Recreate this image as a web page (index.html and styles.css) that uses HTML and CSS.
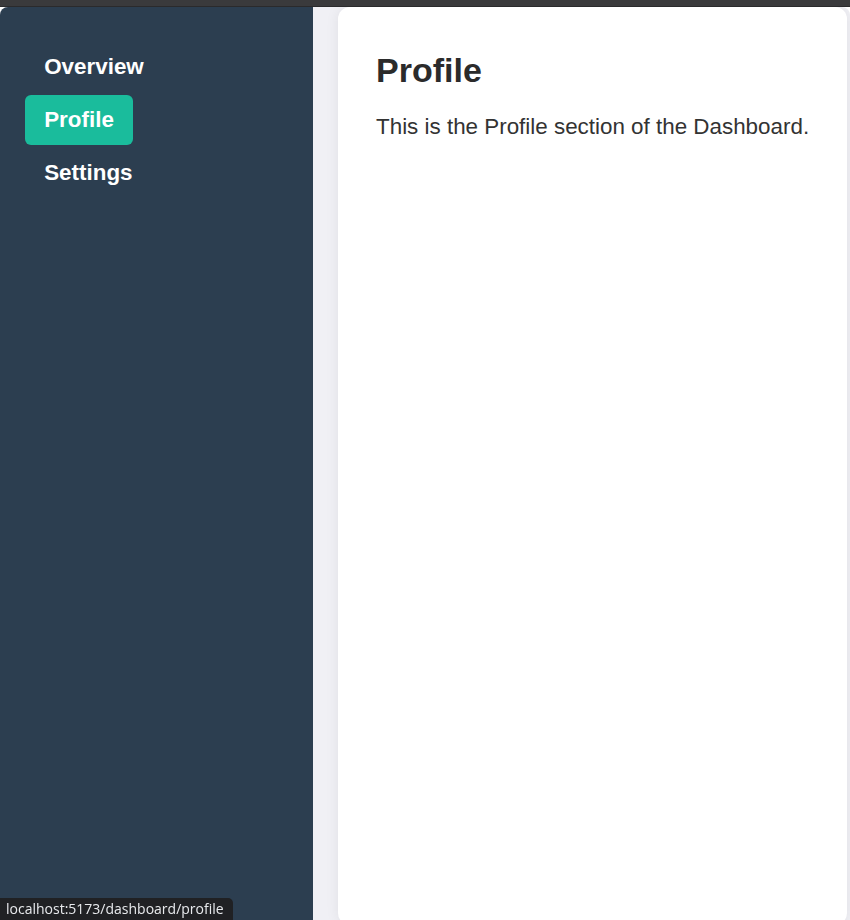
FILE: index.html
```html
<!DOCTYPE html>
<html lang="en">
<head>
<meta charset="utf-8">
<title>Dashboard</title>
<link rel="stylesheet" href="styles.css">
</head>
<body>
<div class="chrome"></div>
<div class="app">
  <aside class="sidebar">
    <nav class="nav">
      <a class="nav-item" href="#">Overview</a>
      <a class="nav-item active" href="#">Profile</a>
      <a class="nav-item" href="#">Settings</a>
    </nav>
  </aside>
  <main class="main">
    <section class="card">
      <h1 class="title">Profile</h1>
      <p class="text">This is the Profile section of the Dashboard.</p>
    </section>
  </main>
</div>
<div class="status">localhost:5173/dashboard/profile</div>
</body>
</html>
```
FILE: styles.css
```css
html, body {
  margin: 0;
  padding: 0;
  height: 100%;
}
body {
  background: #ffffff;
  font-family: "Liberation Sans", Arial, sans-serif;
  overflow: hidden;
}
.chrome {
  height: 7px;
  background: #3a3a3c;
  border-bottom: 1px solid #2a2a2c;
  box-sizing: border-box;
}
.app {
  display: flex;
  height: 913px;
  background: #f0f0f5;
  border-radius: 8px 8px 0 0;
  overflow: hidden;
}
.sidebar {
  width: 313px;
  flex: none;
  background: #2c3e50;
  padding: 35px 25px;
  box-sizing: border-box;
}
.nav {
  display: flex;
  flex-direction: column;
  align-items: flex-start;
  gap: 3px;
}
.nav-item {
  display: block;
  color: #ffffff;
  text-decoration: none;
  font-weight: bold;
  font-size: 22.4px;
  padding: 12px 19.2px;
  border-radius: 6px;
}
.nav-item.active {
  background: #1abc9c;
}
.main {
  flex: 1;
  padding: 0 3px 0 25px;
}
.card {
  background: #ffffff;
  border-radius: 12px;
  box-shadow: 0 0 14px rgba(0, 0, 0, 0.07);
  height: 918px;
  padding: 44px 20px 44px 38px;
  box-sizing: border-box;
}
.title {
  margin: 0;
  font-size: 34px;
  font-weight: bold;
  color: #2b2b2b;
}
.text {
  margin: 24px 0 0;
  font-size: 22.4px;
  color: #333333;
  white-space: nowrap;
}
.status {
  position: fixed;
  left: 0;
  bottom: 0;
  height: 22px;
  line-height: 22px;
  padding: 0 9px 0 6px;
  background: #202124;
  color: #e8eaed;
  font-family: "Open Sans", "Noto Sans", sans-serif;
  font-size: 14px;
  border-radius: 0 5px 0 0;
}
```
